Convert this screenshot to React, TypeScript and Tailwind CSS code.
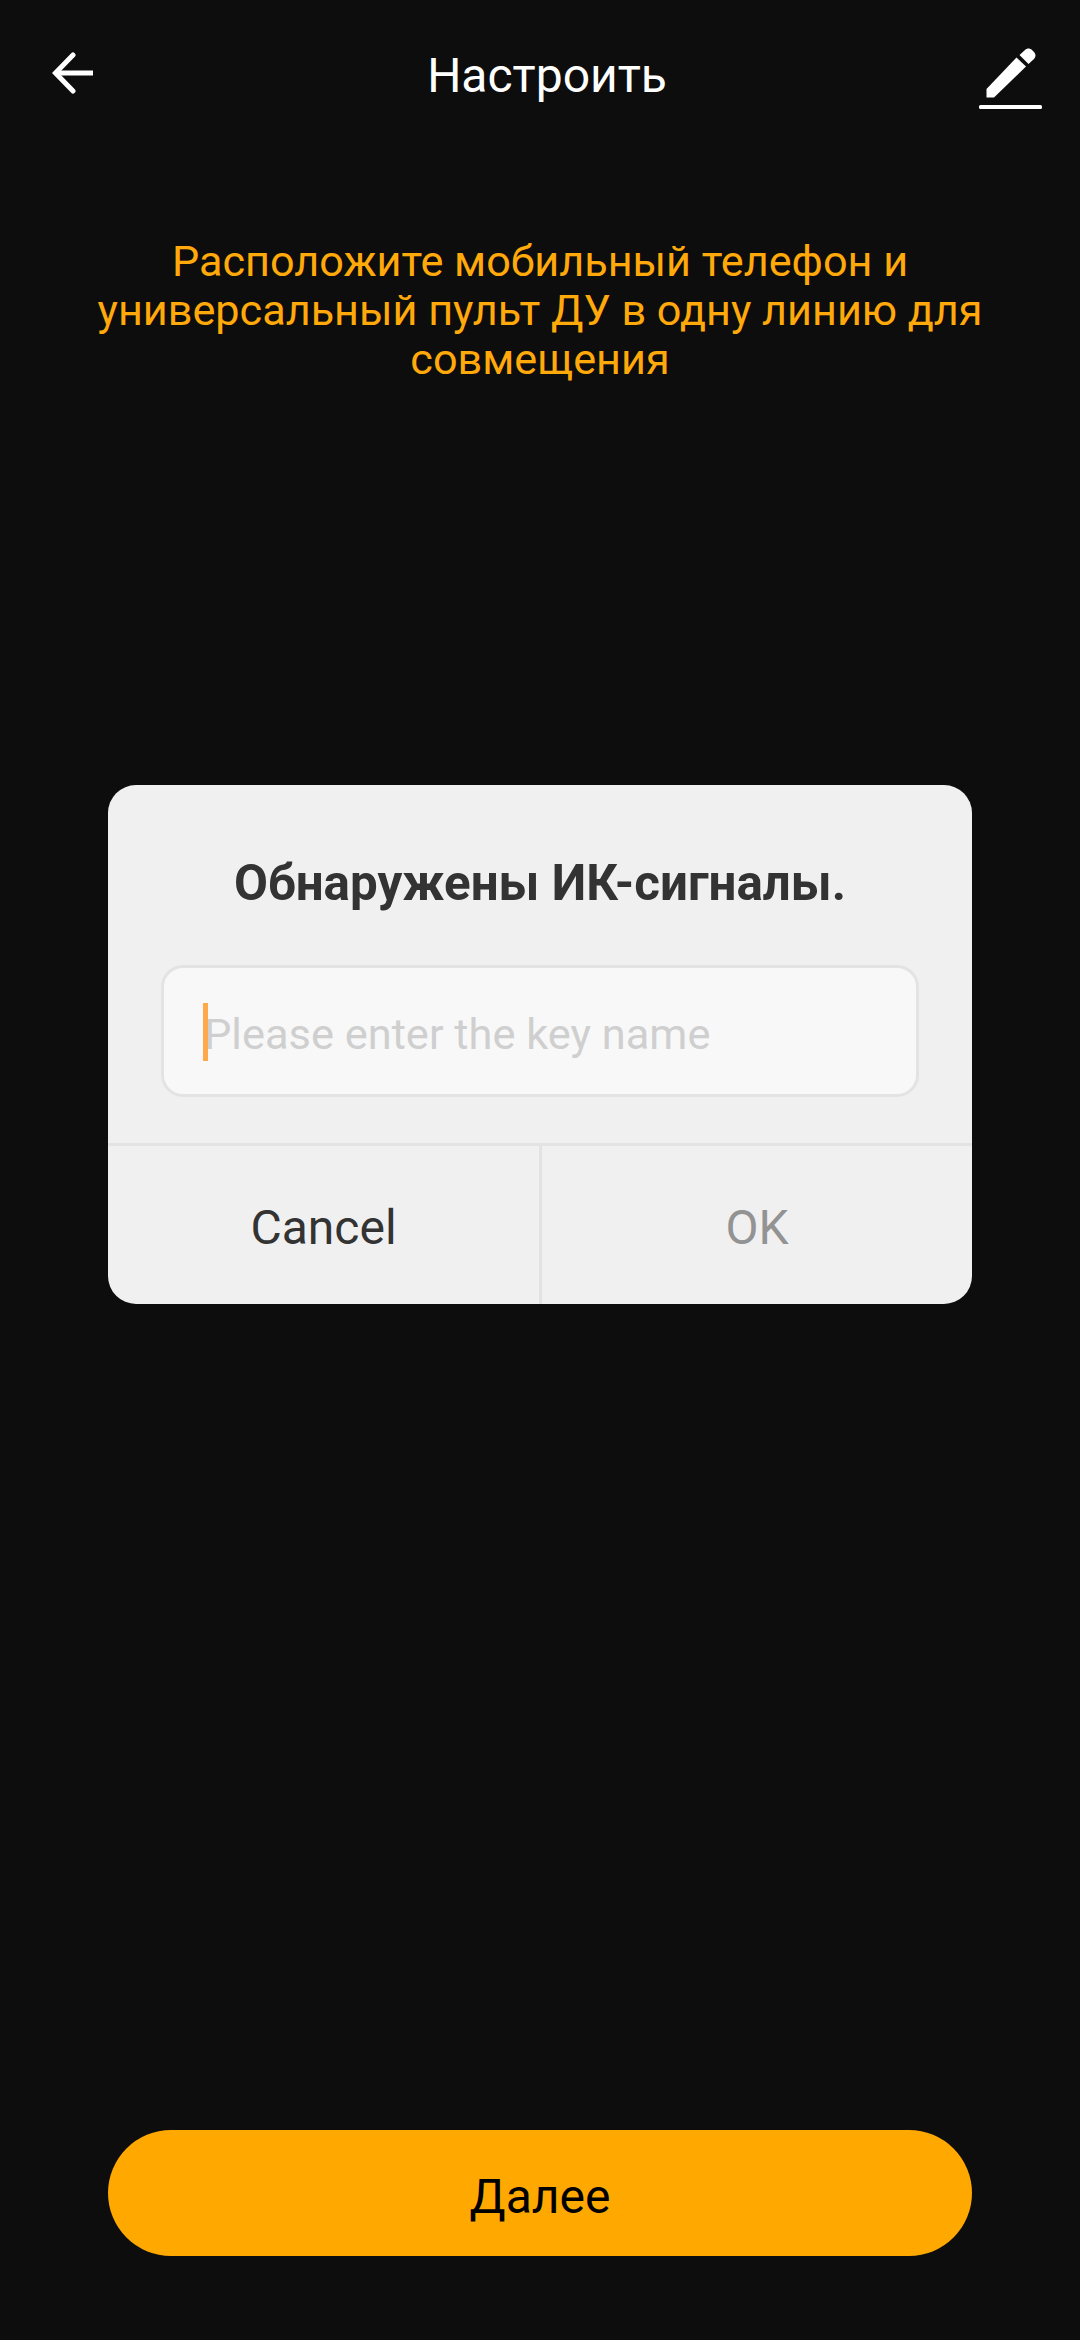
const ArrowBack = () => (
  <svg width="46" height="44" viewBox="0 0 46 44" fill="none" stroke="white" strokeWidth="5" strokeLinecap="round" strokeLinejoin="miter">
    <path d="M6 21H42" strokeLinecap="butt" />
    <path d="M22 3L4.500 21L22 39" />
  </svg>
);

const PenIcon = () => (
  <svg width="64" height="64" viewBox="0 0 64 64" fill="white">
    <path d="M8.500 43L38.500 11.500L48 20.500L16 51.500H8.500Z" />
    <path d="M41.500 9L47 4C49 2 52 2 54 4L56 6C58 8 58 11 56 13L50.500 18Z" />
    <rect x="1" y="59" width="63" height="4" rx="1.500" />
  </svg>
);

export default function App() {
  return (
    <div className="h-[2340px] w-[1080px] bg-[#0d0d0d] flex flex-col items-center font-['Roboto',sans-serif] overflow-hidden">
      <div className="w-full h-[150px] pl-[51px] pr-[38px] flex items-start justify-between shrink-0">
        <div className="mt-[52px]">
          <ArrowBack />
        </div>
        <div className="text-white text-[48px] leading-[56px] mt-[48px] ml-[19px]">Настроить</div>
        <div className="mt-[46px]">
          <PenIcon />
        </div>
      </div>

      <p className="w-[920px] mt-[87px] text-center text-[#ffa90a] text-[43.200px] leading-[49px]">
        Расположите мобильный телефон и универсальный пульт ДУ в одну линию для совмещения
      </p>

      <div className="mt-[401px] w-[864px] h-[519px] bg-[#f0f0f0] rounded-[28px] flex flex-col overflow-hidden">
        <div className="h-[180px] pt-[70px] text-center text-[#333333] text-[49.300px] leading-[56px] font-bold shrink-0">
          Обнаружены ИК-сигналы.
        </div>
        <div className="relative mx-[53px] h-[132px] bg-[#f8f8f8] border-[3px] border-[#e3e3e3] rounded-[22px] flex items-center pl-[40px] pt-[8px] text-[#cfcfcf] text-[43.400px] shrink-0">
          <div className="absolute left-[39px] top-[35px] w-[5px] h-[58px] bg-[#ffa94d]" />
          Please enter the key name
        </div>
        <div className="mt-[46px] flex-1 border-t-[3px] border-[#e3e3e3] flex">
          <div className="w-[431px] pt-[5px] flex items-center justify-center text-[#333333] text-[48px]">Cancel</div>
          <div className="flex-1 pt-[5px] border-l-[3px] border-[#e3e3e3] flex items-center justify-center text-[#939393] text-[48px]">OK</div>
        </div>
      </div>

      <div className="mt-[826px] w-[864px] h-[126px] pt-[8px] rounded-full bg-[#ffa900] flex items-center justify-center text-black text-[48px]">
        Далее
      </div>
    </div>
  );
}
